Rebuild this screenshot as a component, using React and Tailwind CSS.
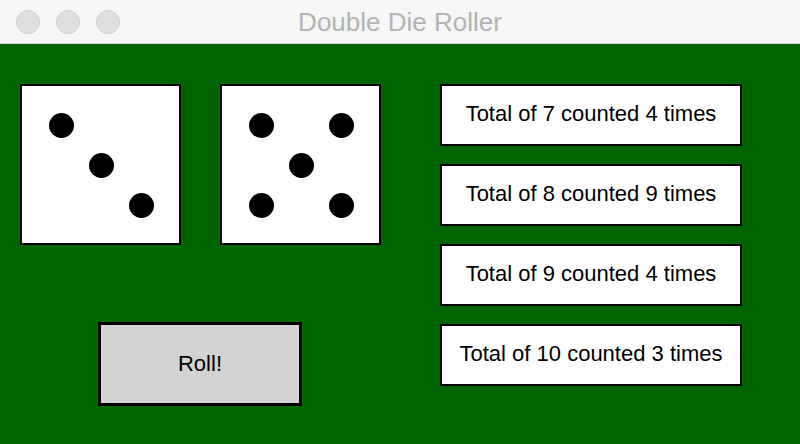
import React from 'react';

const faces = {
	3: [0, 4, 8],
	5: [0, 2, 4, 6, 8],
};

function Die({value}) {
	const pips = faces[value];
	return (
		<div className="w-[161px] h-[161px] bg-white border-2 border-black pl-[19px] pt-[19px]">
			<div className="grid grid-cols-[40px_40px_40px] grid-rows-[40px_40px_40px]">
				{[0, 1, 2, 3, 4, 5, 6, 7, 8].map((i) => (
					<div key={i} className="flex items-center justify-center">
						{pips.includes(i) && <div className="w-[25px] h-[25px] rounded-full bg-black" />}
					</div>
				))}
			</div>
		</div>
	);
}

const totals = [
	{sum: 7, count: 4},
	{sum: 8, count: 9},
	{sum: 9, count: 4},
	{sum: 10, count: 3},
];

export default function App() {
	return (
		<div className="w-[800px] h-[444px] overflow-hidden bg-[#006400]" style={{fontFamily: '"Liberation Sans", Arial, sans-serif'}}>
			{/* title bar */}
			<div className="relative h-[44px] bg-[#f6f6f6] border-b border-[#d2d2d2] flex items-center justify-center">
				<div className="absolute left-[16px] top-[10px] flex gap-[16px]">
					<div className="w-[24px] h-[24px] rounded-full bg-[#dedede] border border-[#cfcfcf]" />
					<div className="w-[24px] h-[24px] rounded-full bg-[#dedede] border border-[#cfcfcf]" />
					<div className="w-[24px] h-[24px] rounded-full bg-[#dedede] border border-[#cfcfcf]" />
				</div>
				<span className="text-[26px] text-[#b3b3b3] leading-none">Double Die Roller</span>
			</div>

			<main className="flex pl-[20px] pt-[40px]">
				<div className="w-[361px] flex flex-col">
					<div className="flex gap-[39px]">
						<Die value={3} />
						<Die value={5} />
					</div>
					<button className="ml-[78px] mt-[77px] w-[204px] h-[84px] bg-[#d3d3d3] border-[3px] border-black text-[22px] text-black pb-[2px]">
						Roll!
					</button>
				</div>

				<div className="ml-[59px] flex flex-col gap-[18px]">
					{totals.map((t) => (
						<div key={t.sum} className="w-[302px] h-[62px] bg-white border-2 border-black flex items-center justify-center text-[22px] text-black pb-[3px]">
							Total of {t.sum} counted {t.count} times
						</div>
					))}
				</div>
			</main>
		</div>
	);
}
